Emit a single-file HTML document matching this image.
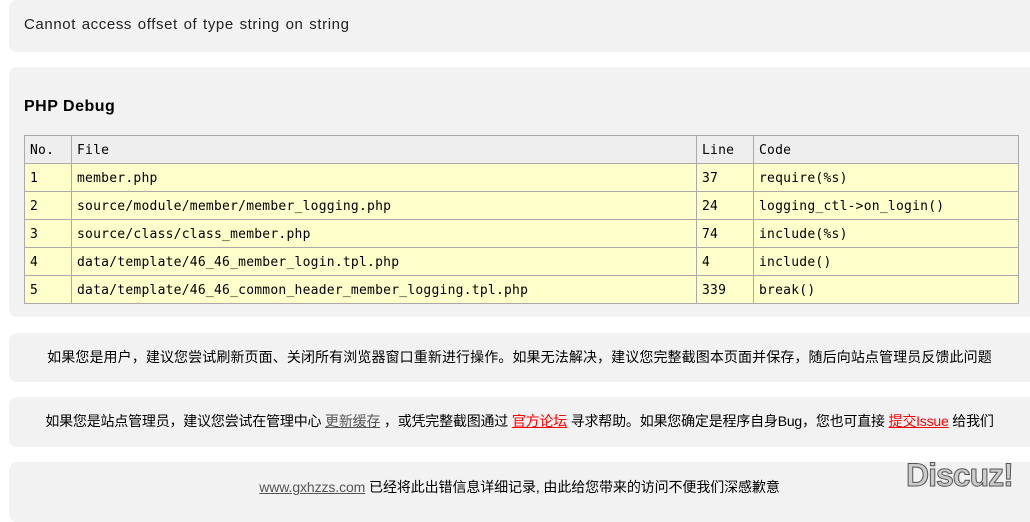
<!DOCTYPE html>
<html><head><meta charset="utf-8"><style>
body{margin:0;background:#fff;font-family:"Liberation Sans","Noto Sans CJK SC",sans-serif;color:#000;width:1030px;height:507px;overflow:hidden;position:relative}
.b{position:absolute;left:9px;width:1021px;background:#f2f2f2;border-radius:8px 0 0 8px}
.c{font-size:14px;text-align:center;line-height:18px;letter-spacing:-0.1px}
table{position:absolute;left:24px;top:135px;width:995px;border-collapse:collapse;font-family:"DejaVu Sans Mono","Liberation Mono",monospace;font-size:13px;letter-spacing:0.23px}
td{border:1px solid #aaa;height:25px;padding:2px 5px 0;background:#ffffcc;line-height:16px}
tr.h td{background:#eee}
a{color:#555}
a.r{color:#f00}
</style></head><body>
<div class="b" style="top:0;height:52px"><div style="position:absolute;left:15px;top:16px;font-size:15px;color:#222;letter-spacing:0.6px;word-spacing:1px">Cannot access offset of type string on string</div></div>
<div class="b" style="top:67px;height:250px"><div style="position:absolute;left:15px;top:31px;font-size:16px;font-weight:bold;letter-spacing:0.5px">PHP Debug</div></div>
<table>
<tr class="h"><td style="width:36px">No.</td><td>File</td><td style="width:46px">Line</td><td style="width:254px">Code</td></tr>
<tr><td>1</td><td>member.php</td><td>37</td><td>require(%s)</td></tr>
<tr><td>2</td><td>source/module/member/member_logging.php</td><td>24</td><td>logging_ctl-&gt;on_login()</td></tr>
<tr><td>3</td><td>source/class/class_member.php</td><td>74</td><td>include(%s)</td></tr>
<tr><td>4</td><td>data/template/46_46_member_login.tpl.php</td><td>4</td><td>include()</td></tr>
<tr><td>5</td><td>data/template/46_46_common_header_member_logging.tpl.php</td><td>339</td><td>break()</td></tr>
</table>
<div class="b c" style="top:333px;height:49px"><div style="padding-top:15px;letter-spacing:0.1px">如果您是用户，建议您尝试刷新页面、关闭所有浏览器窗口重新进行操作。如果无法解决，建议您完整截图本页面并保存，随后向站点管理员反馈此问题</div></div>
<div class="b c" style="top:397px;height:50px"><div style="padding-top:15px;letter-spacing:-0.2px">如果您是站点管理员，建议您尝试在管理中心 <a href="#">更新缓存</a> ，或凭完整截图通过 <a class="r" href="#">官方论坛</a> 寻求帮助。如果您确定是程序自身Bug，您也可直接 <a class="r" href="#">提交Issue</a> 给我们</div></div>
<div class="b c" style="top:462px;height:60px"><div style="padding-top:16px"><a href="#">www.gxhzzs.com</a> 已经将此出错信息详细记录, 由此给您带来的访问不便我们深感歉意</div>
<div style="position:absolute;left:897px;top:4px;font-size:32px;font-weight:bold;color:#ccc;-webkit-text-stroke:1px #555;letter-spacing:-1px">Discuz!</div></div>
</body></html>
